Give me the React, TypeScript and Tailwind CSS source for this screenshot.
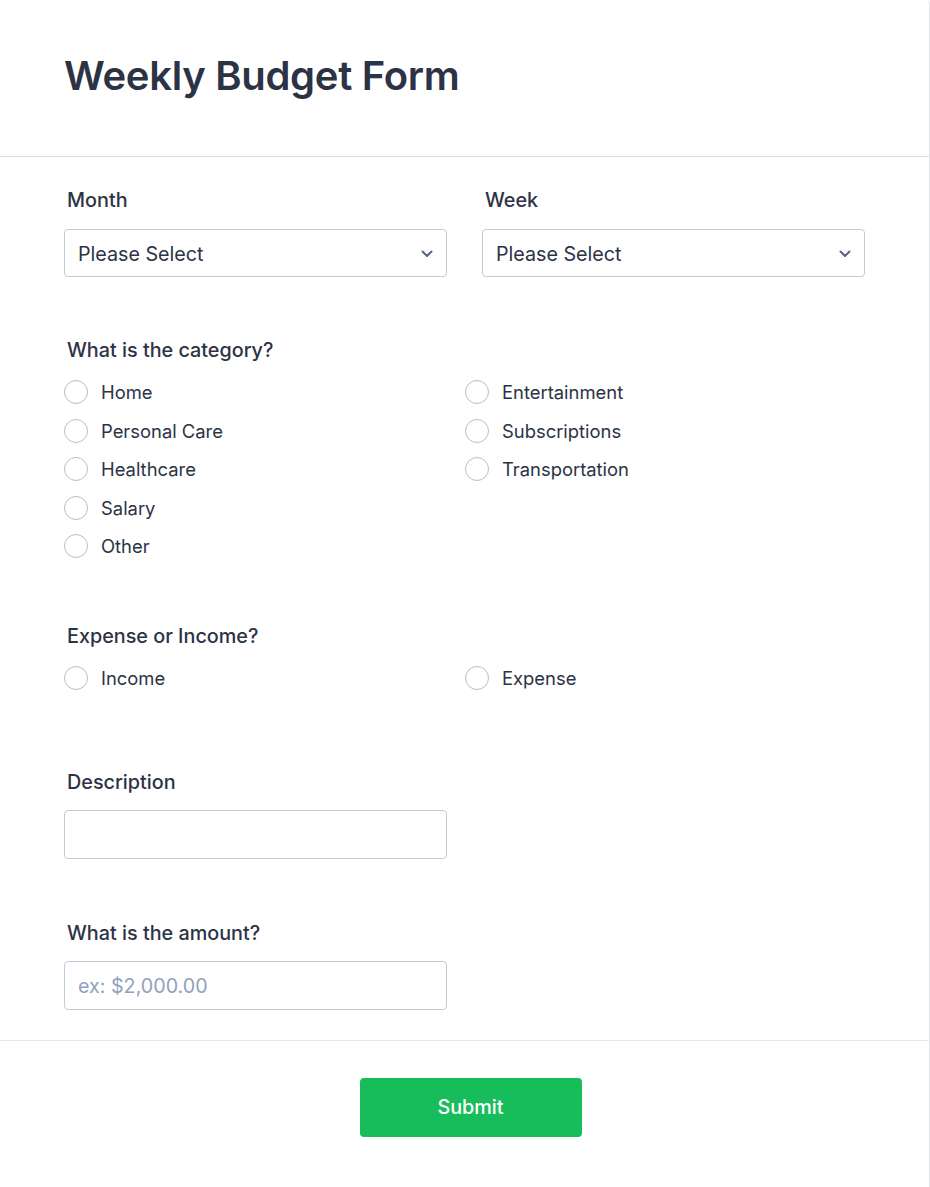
import React from "react";

const font = { fontFamily: "Inter, 'Noto Sans', sans-serif" };

function Radio({ label }: { label: string }) {
  return (
    <label className="flex items-center h-[24px] cursor-pointer">
      <span className="w-[24px] h-[24px] rounded-full border border-[#b8bdc9] bg-white shrink-0" />
      <span className="ml-[13px] text-[18.4px] leading-[24px] text-[#2c3345]">{label}</span>
    </label>
  );
}

function Select() {
  return (
    <div className="relative h-[48px] border border-[#c3cad8] rounded-[4px] bg-white flex items-center px-[13px]">
      <span className="text-[19.7px] text-[#2c3345] pt-[3px]">Please Select</span>
      <svg className="absolute right-[13px] top-[20px]" width="12" height="8" viewBox="0 0 12 8" fill="none">
        <path d="M1.5 1.5L6 6L10.5 1.5" stroke="#57647e" strokeWidth="2" strokeLinecap="round" strokeLinejoin="round" />
      </svg>
    </div>
  );
}

function Label({ children }: { children: React.ReactNode }) {
  return <div className="pl-[3px] text-[19.8px] leading-[24px] font-medium text-[#2c3345]">{children}</div>;
}

export default function App() {
  return (
    <div style={font} className="w-[930px] min-h-[1187px] bg-white border-r border-[#e3e5ee] rounded-tr-[4px]">
      <div className="h-[157px] border-b border-[#d9dbe6] pl-[64px] flex items-center">
        <h1 className="text-[40px] font-semibold text-[#2c3345] tracking-[-0.3px] -mt-[4px]">Weekly Budget Form</h1>
      </div>

      <div className="px-[64px]">
        <div className="pt-[31px] grid grid-cols-2 gap-x-[35px] w-[801px]">
          <div>
            <Label>Month</Label>
            <div className="mt-[17px]">
              <Select />
            </div>
          </div>
          <div>
            <Label>Week</Label>
            <div className="mt-[17px]">
              <Select />
            </div>
          </div>
        </div>

        <div className="pt-[61px]">
          <Label>What is the category?</Label>
          <div className="mt-[18px] grid grid-cols-2 w-[802px]">
            <div className="flex flex-col gap-[14.5px]">
              <Radio label="Home" />
              <Radio label="Personal Care" />
              <Radio label="Healthcare" />
              <Radio label="Salary" />
              <Radio label="Other" />
            </div>
            <div className="flex flex-col gap-[14.5px]">
              <Radio label="Entertainment" />
              <Radio label="Subscriptions" />
              <Radio label="Transportation" />
            </div>
          </div>
        </div>

        <div className="pt-[66px]">
          <Label>Expense or Income?</Label>
          <div className="mt-[18px] grid grid-cols-2 w-[802px]">
            <Radio label="Income" />
            <Radio label="Expense" />
          </div>
        </div>

        <div className="pt-[80px]">
          <Label>Description</Label>
          <input
            type="text"
            className="mt-[16px] block w-[383px] h-[49px] border border-[#c3cad8] rounded-[4px] px-[13px] text-[19.7px] text-[#2c3345] outline-none"
          />
        </div>

        <div className="pt-[62px] pb-[30px]">
          <Label>What is the amount?</Label>
          <input
            type="text"
            placeholder="ex: $2,000.00"
            className="mt-[16px] block w-[383px] h-[49px] border border-[#c3cad8] rounded-[4px] px-[13px] text-[19.7px] text-[#2c3345] placeholder:text-[#8fa2bd] outline-none"
          />
        </div>
      </div>

      <div className="border-t border-[#e6e6f2] flex justify-center pl-[12px] pt-[37px] pb-[50px]">
        <button className="w-[222px] h-[59px] rounded-[4px] bg-[#18bd5b] text-white text-[19.8px] font-medium">
          Submit
        </button>
      </div>
    </div>
  );
}
